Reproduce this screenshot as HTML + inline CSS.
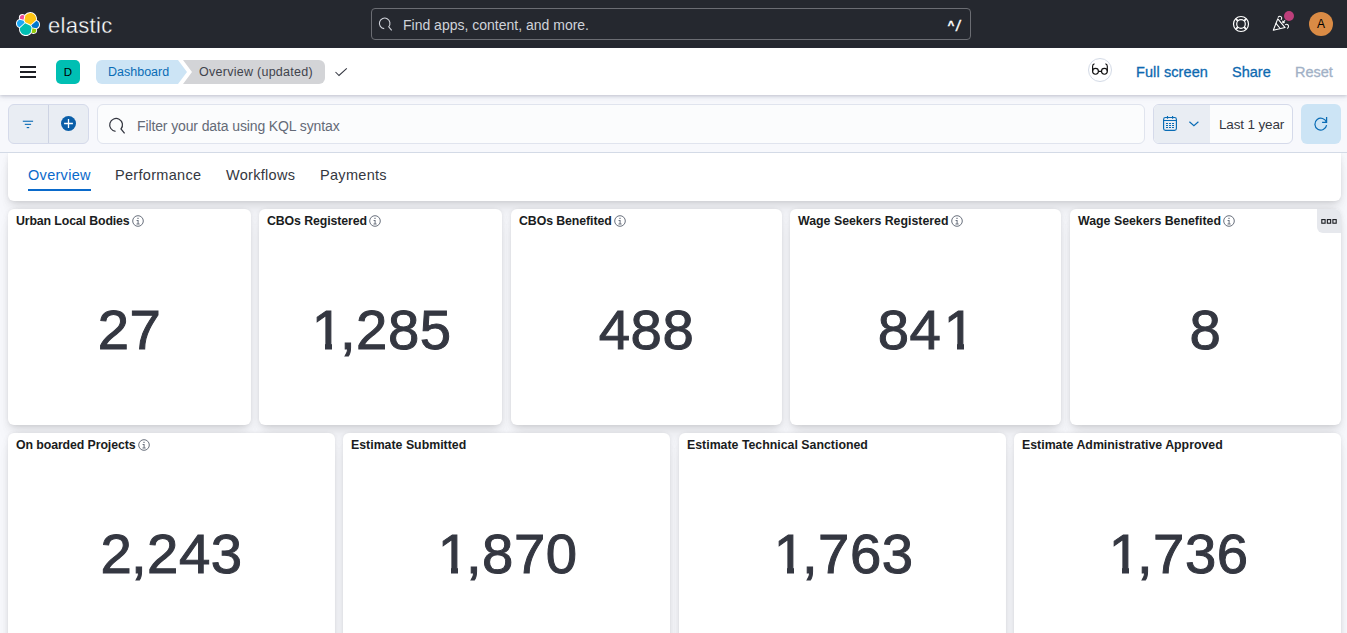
<!DOCTYPE html>
<html lang="en">
<head>
<meta charset="utf-8">
<title>Overview (updated) - Elastic</title>
<style>
*{box-sizing:border-box;margin:0;padding:0}
html,body{width:1347px;height:633px;overflow:hidden}
body{font-family:"Liberation Sans",sans-serif;background:#f7f8fc;color:#1a1c21;position:relative}
.abs{position:absolute}
/* top dark bar */
#top{position:absolute;left:0;top:0;width:1347px;height:48px;background:#25282f}
#brand{position:absolute;left:48px;top:11px;font-size:22px;line-height:30px;color:#fff;letter-spacing:.3px;-webkit-text-stroke:.35px #25282f}
#search{position:absolute;left:371px;top:8px;width:600px;height:32px;border:1px solid #6b6d73;border-radius:4px;background:#25282f}
#search .ph{position:absolute;left:31px;top:0;line-height:32px;font-size:14px;color:#d0d3da}
#search .kbd{position:absolute;left:570px;top:0;width:24px;height:30px;font-weight:bold;color:#fff;font-family:"Liberation Mono",monospace}
#search .kbd span{position:absolute;line-height:20px}
#search .kbd .k1{left:5.700px;top:6.900px;font-size:11px;-webkit-text-stroke:.4px #fff}
#search .kbd .k2{left:12.600px;top:8.300px;font-size:14.500px;transform:scaleX(.76);transform-origin:0 0;-webkit-text-stroke:.5px #fff}
#avatar{position:absolute;left:1309px;top:12px;width:24px;height:24px;border-radius:50%;background:#da8b45;color:#000;font-size:12px;line-height:24px;text-align:center}
#dot{position:absolute;left:1284px;top:11px;width:10px;height:10px;border-radius:50%;background:#bd3f7b}
/* second header */
#hdr{position:absolute;left:0;top:48px;width:1347px;height:47px;background:#fff;box-shadow:0 1px 3px rgba(60,70,100,.22),0 2px 6px rgba(60,70,100,.10);z-index:3}
#space{position:absolute;left:56px;top:12px;width:24px;height:24px;border-radius:5px;background:#00bfb3;color:#000;font-size:11.5px;line-height:24px;text-align:center}
.bc{position:absolute;top:12px;height:24px;line-height:24px;font-size:12.5px}
#bc1{left:96px;width:91px;background:#cce4f5;color:#0a6cb5;padding-left:12px;border-radius:6px 0 0 6px;clip-path:polygon(0 0,82px 0,91px 12px,82px 24px,0 24px)}
#bc2{left:183px;width:142px;letter-spacing:.27px;background:#d3d4d7;color:#3f434c;padding-left:16px;border-radius:0 6px 6px 0;clip-path:polygon(0 0,142px 0,142px 24px,0 24px,9px 12px)}
.lnk{position:absolute;top:13px;font-size:14.5px;line-height:22px;color:#0e69b0;-webkit-text-stroke:.3px currentColor}
/* filter bar */
#fbar{position:absolute;left:0;top:95px;width:1347px;height:58px;background:#f7f8fc;border-bottom:1px solid #d3dae6;z-index:1}
#fgrp{position:absolute;left:8px;top:9px;width:81px;height:40px;border:1px solid #d5daea;border-radius:6px;background:#e9edf3}
#fgrp .sep{position:absolute;left:39px;top:0;width:1px;height:38px;background:#cdd3e3}
#q{position:absolute;left:97px;top:9px;width:1048px;height:40px;border:1px solid #e0e4ee;border-radius:6px;background:#fbfcfd}
#q .ph{position:absolute;left:39px;top:.6px;line-height:40px;font-size:14px;color:#646a77;letter-spacing:-.12px}
#dp{position:absolute;left:1153px;top:9px;width:140px;height:40px;border:1px solid #d5daea;border-radius:6px;background:#fbfcfd;overflow:hidden}
#dp .l{position:absolute;left:0;top:0;width:56px;height:38px;background:#e9edf3}
#dp .t{position:absolute;left:65px;top:1px;line-height:38px;font-size:13.5px;color:#343741;letter-spacing:-.15px}
#rf{position:absolute;left:1301px;top:9px;width:40px;height:40px;border-radius:6px;background:#cce4f5}
/* tabs */
#tabs{position:absolute;left:8px;top:153px;width:1333px;height:48px;background:#fff;border-radius:0 0 6px 6px;box-shadow:0 .9px 4px -1px rgba(0,0,0,.08),0 2.6px 8px -1px rgba(0,0,0,.06),0 5.7px 12px -1px rgba(0,0,0,.05),0 15px 15px -1px rgba(0,0,0,.04)}
.tab{position:absolute;top:11px;font-size:14.5px;line-height:22px;color:#343741;letter-spacing:.3px}
#t1{color:#0a6acb}
#tline{position:absolute;left:20px;top:36px;width:63px;height:2px;background:#0a6acb}
/* panels */
.p{position:absolute;background:#fff;border-radius:6px;box-shadow:0 .9px 4px -1px rgba(0,0,0,.08),0 2.6px 8px -1px rgba(0,0,0,.06),0 5.7px 12px -1px rgba(0,0,0,.05),0 15px 15px -1px rgba(0,0,0,.04)}
.p h3{position:absolute;left:8px;top:5px;font-size:12.35px;line-height:14px;font-weight:bold;color:#1a1c21;white-space:nowrap}
.p .i{display:inline-block;vertical-align:top;margin-left:2.500px;margin-top:1px}
.p .n{position:absolute;left:0;width:100%;text-align:center;top:86.100px;font-size:56.300px;line-height:70px;color:#343741;letter-spacing:.5px;-webkit-text-stroke:1px #343741}
.p .n i{font-style:normal;margin:0 -.2px 0 -1.2px}
.p .n b{font-weight:normal;position:relative;left:2.300px}
.p .n b::before,.p .n b::after{content:"";position:absolute;top:.8em;height:.14em;width:.2em;background:#fff}
.p .n b::before{left:.035em}
.p .n b::after{left:.357em}
.r1{top:209px;height:216px}
.r2{top:433px;height:216px}
#more{position:absolute;right:0;top:0;width:24px;height:24px;background:#e6e8ed;border-radius:0 6px 0 6px}
</style>
</head>
<body>
<div id="top">
  <svg class="abs" style="left:16px;top:12px" width="24" height="24" viewBox="0 0 32 32">
    <g fill="none" fill-rule="evenodd">
      <path fill="#FFF" d="M32 16.77a6.334 6.334 0 0 0-4.194-5.97 8.9 8.9 0 0 0 .166-1.71C27.972 4.077 23.895 0 18.89 0a9.051 9.051 0 0 0-7.36 3.76 4.78 4.78 0 0 0-2.93-1A4.805 4.805 0 0 0 3.8 7.56c0 .585.106 1.152.301 1.675A6.372 6.372 0 0 0 0 15.207a6.345 6.345 0 0 0 4.211 5.986c-.11.542-.166 1.11-.166 1.71C4.045 27.897 8.110 32 13.105 32c2.934 0 5.654-1.409 7.36-3.765a4.745 4.745 0 0 0 2.917 1.004 4.805 4.805 0 0 0 4.8-4.8c0-.585-.106-1.152-.301-1.675A6.385 6.385 0 0 0 32 16.770"/>
      <path fill="#FEC514" d="M12.58 13.787l7.002 3.211 7.066-6.213a7.849 7.849 0 0 0 .152-1.557c0-4.339-3.51-7.848-7.848-7.848a7.867 7.867 0 0 0-6.491 3.415l-1.177 6.115 1.296 2.877z"/>
      <path fill="#00BFB3" d="M5.333 21.215a7.973 7.973 0 0 0-.152 1.58c0 4.353 3.537 7.89 7.901 7.890a7.888 7.888 0 0 0 6.510-3.444l1.164-6.076-1.557-2.971-7.028-3.211-6.838 6.232z"/>
      <path fill="#F04E98" d="M5.290 9.085l4.801 1.136L11.151 4.766a3.793 3.793 0 0 0-6.082 3.020c0 .455.079.894.221 1.299"/>
      <path fill="#1BA9F5" d="M4.872 10.234c-2.138.705-3.642 2.764-3.642 5.052a5.320 5.320 0 0 0 3.417 4.975l6.733-6.087-1.231-2.639-5.277-1.301z"/>
      <path fill="#93C90E" d="M20.873 27.240a3.743 3.743 0 0 0 2.308.797 3.793 3.793 0 0 0 3.793-3.793c0-.456-.079-.895-.221-1.299l-4.788-1.122-1.092 5.417z"/>
      <path fill="#07C" d="M21.847 20.562l5.272 1.233c2.151-.705 3.642-2.764 3.642-5.066a5.313 5.313 0 0 0-3.417-4.962l-6.896 6.043 1.399 2.752z"/>
    </g>
  </svg>
  <div id="brand">elastic</div>
  <div id="search">
    <svg class="abs" style="left:6.200px;top:7.200px" width="16.500" height="16.500" viewBox="0 0 20 20"><path fill="none" stroke="#d0d3da" stroke-width="1.350" d="M16.600 17.400L13 13.010A6.400 6.400 0 1 0 7.540 15.280"/></svg>
    <span class="ph">Find apps, content, and more.</span>
    <span class="kbd"><span class="k1">^</span><span class="k2">/</span></span>
  </div>
  <svg class="abs" style="left:1232px;top:15px" width="18" height="18" viewBox="0 0 18 18"><g fill="none" stroke="#fff"><circle cx="9" cy="9" r="7.500" stroke-width="1.200"/><circle cx="9" cy="9" r="4.300" stroke-width="1.200"/><path stroke-width="1.900" d="M3.900 3.900l1.900 1.900M14.100 3.900l-1.900 1.900M3.900 14.100l1.900-1.900M14.100 14.100l-1.900-1.900"/></g></svg>
  <svg class="abs" style="left:1272px;top:15px" width="20" height="20" viewBox="0 0 20 20"><g fill="none" stroke="#fff" stroke-width="1.050" stroke-linejoin="round" stroke-linecap="round"><path d="M5.800 3.800L1.300 15.300l11.800-2.700z"/><path d="M4 8.300l4.200 5.200"/><path d="M6.200 2.200c.6-1.300 2.700-1.500 3.400.2.300.8.100 1.500-.4 2.100"/><path d="M13.500 9.600c1.200-.7 2.900.1 3 1.500.1.900-.3 1.700-1 2.200"/><path d="M12.800 5.600l-2 2M10.800 6.100v1.500h1.500"/></g></svg>
  <div id="dot"></div>
  <div id="avatar">A</div>
</div>

<div id="hdr">
  <svg class="abs" style="left:20px;top:18px" width="16" height="12" viewBox="0 0 16 12"><path fill="#1d1e24" d="M0 0h16v2H0zM0 5h16v2H0zM0 10h16v2H0z"/></svg>
  <div id="space">D</div>
  <div class="bc" id="bc1">Dashboard</div>
  <div class="bc" id="bc2">Overview (updated)</div>
  <svg class="abs" style="left:334px;top:17px" width="14" height="12" viewBox="0 0 14 12"><path fill="none" stroke="#343741" stroke-width="1.050" d="M1.500 7l3.500 3.500L12.800 3.300"/></svg>
  <div class="abs" style="left:1088px;top:10px;width:24px;height:24px;border-radius:50%;border:1px solid #d3dae6;background:#fff"></div>
  <svg class="abs" style="left:1091px;top:14px" width="18" height="14" viewBox="0 0 18 14"><g fill="none" stroke="#111" stroke-width="1.150"><circle cx="4.500" cy="9.300" r="2.900"/><circle cx="13.400" cy="9.300" r="2.900"/><path d="M7.400 9.300h3.100M1.600 9.300V4.200c0-1.400.8-2.200 1.900-2.500M16.300 9.300V4.200c0-1.400-.8-2.200-1.900-2.500"/></g></svg>
  <div class="lnk" style="left:1136px;letter-spacing:.1px">Full screen</div>
  <div class="lnk" style="left:1232px">Share</div>
  <div class="lnk" style="left:1295px;color:#a2b1c6">Reset</div>
</div>

<div id="fbar">
  <div id="fgrp">
    <svg class="abs" style="left:13px;top:13px" width="12" height="12" viewBox="0 0 12 12"><g fill="#0a6cb5"><rect x=".8" y="2.700" width="10.300" height="1.100"/><rect x="2.800" y="5.800" width="6.300" height="1.100"/><rect x="4.700" y="9" width="2.500" height="1.150"/></g></svg>
    <div class="sep"></div>
    <svg class="abs" style="left:51px;top:10px" width="17" height="17" viewBox="0 0 17 17"><circle cx="8.500" cy="8.500" r="7.500" fill="#0a5ea8"/><path stroke="#fff" stroke-width="1.300" d="M8.500 4.100v8.800M4.100 8.500h8.800"/></svg>
  </div>
  <div id="q">
    <svg class="abs" style="left:10px;top:11px" width="20" height="20" viewBox="0 0 20 20"><path fill="none" stroke="#343741" stroke-width="1.250" d="M16.600 17.400L13 13.010A6.400 6.400 0 1 0 7.540 15.280"/></svg>
    <span class="ph">Filter your data using KQL syntax</span>
  </div>
  <div id="dp">
    <div class="l"></div>
    <svg class="abs" style="left:8px;top:10px" width="16" height="17" viewBox="0 0 16 17"><g fill="none" stroke="#0a6cb5" stroke-width="1.150"><rect x="1.600" y="2.500" width="12.800" height="12.800" rx="1.900"/><path d="M1.600 5.500h12.800M5.500 1v2.700M10.600 1v2.700"/></g><g fill="#0a6cb5"><rect x="4" y="8" width="2" height="1"/><rect x="7" y="8" width="2" height="1"/><rect x="10" y="8" width="2" height="1"/><rect x="4" y="10" width="2" height="1"/><rect x="7" y="10" width="2" height="1"/><rect x="10" y="10" width="2" height="1"/><rect x="4" y="12" width="2" height="1"/><rect x="7" y="12" width="2" height="1"/><rect x="10" y="12" width="2" height="1"/></g></svg>
    <svg class="abs" style="left:34px;top:15px" width="12" height="8" viewBox="0 0 12 8"><path fill="none" stroke="#0a6cb5" stroke-width="1.150" d="M1.400 1.700L5.900 5.800l4.500-4.100"/></svg>
    <span class="t">Last 1 year</span>
  </div>
  <div id="rf">
    <svg class="abs" style="left:11px;top:11px" width="18" height="18" viewBox="0 0 18 18"><g fill="none" stroke="#0a6cb5" stroke-width="1.250"><path d="M14.440 7.380A5.900 5.900 0 1 0 14.610 10.120"/><path d="M14.600 2v5.400h-4.500"/></g></svg>
  </div>
</div>

<div id="tabs">
  <div class="tab" id="t1" style="left:20px">Overview</div>
  <div class="tab" style="left:107px">Performance</div>
  <div class="tab" style="left:218px">Workflows</div>
  <div class="tab" style="left:312px">Payments</div>
  <div id="tline"></div>
</div>

<div class="p r1" style="left:8px;width:243px"><h3 style="letter-spacing:-.13px">Urban Local Bodies<svg class="i" width="12" height="12" viewBox="0 0 12 12"><circle cx="6" cy="6" r="5.300" fill="none" stroke="#69707d" stroke-width="1"/><path fill="#69707d" d="M5.400 2.800h1.200V4H5.400zM4.600 5h2v3.600h1v.9H4.500v-.9h1.100V5.900h-1z"/></svg></h3><div class="n">27</div></div>
<div class="p r1" style="left:259px;width:243px"><h3 style="letter-spacing:-.11px">CBOs Registered<svg class="i" width="12" height="12" viewBox="0 0 12 12"><circle cx="6" cy="6" r="5.300" fill="none" stroke="#69707d" stroke-width="1"/><path fill="#69707d" d="M5.400 2.800h1.200V4H5.400zM4.600 5h2v3.600h1v.9H4.500v-.9h1.100V5.900h-1z"/></svg></h3><div class="n"><b>1</b><i>,</i>285</div></div>
<div class="p r1" style="left:511px;width:271px"><h3 style="letter-spacing:-.09px">CBOs Benefited<svg class="i" width="12" height="12" viewBox="0 0 12 12"><circle cx="6" cy="6" r="5.300" fill="none" stroke="#69707d" stroke-width="1"/><path fill="#69707d" d="M5.400 2.800h1.200V4H5.400zM4.600 5h2v3.600h1v.9H4.500v-.9h1.100V5.900h-1z"/></svg></h3><div class="n">488</div></div>
<div class="p r1" style="left:790px;width:271px"><h3>Wage Seekers Registered<svg class="i" width="12" height="12" viewBox="0 0 12 12"><circle cx="6" cy="6" r="5.300" fill="none" stroke="#69707d" stroke-width="1"/><path fill="#69707d" d="M5.400 2.800h1.200V4H5.400zM4.600 5h2v3.600h1v.9H4.500v-.9h1.100V5.900h-1z"/></svg></h3><div class="n">84<b>1</b></div></div>
<div class="p r1" style="left:1070px;width:271px"><h3>Wage Seekers Benefited<svg class="i" width="12" height="12" viewBox="0 0 12 12"><circle cx="6" cy="6" r="5.300" fill="none" stroke="#69707d" stroke-width="1"/><path fill="#69707d" d="M5.400 2.800h1.200V4H5.400zM4.600 5h2v3.600h1v.9H4.500v-.9h1.100V5.900h-1z"/></svg></h3><div class="n">8</div>
  <div id="more"><svg class="abs" style="left:4px;top:9.600px" width="16" height="6" viewBox="0 0 16 6"><g fill="none" stroke="#1a1c21" stroke-width="1.100"><rect x=".8" y=".6" width="3.300" height="3.600"/><rect x="6.350" y=".6" width="3.300" height="3.600"/><rect x="11.900" y=".6" width="3.300" height="3.600"/></g></svg></div>
</div>

<div class="p r2" style="left:8px;width:327px"><h3 style="letter-spacing:-.1px">On boarded Projects<svg class="i" width="12" height="12" viewBox="0 0 12 12"><circle cx="6" cy="6" r="5.300" fill="none" stroke="#69707d" stroke-width="1"/><path fill="#69707d" d="M5.400 2.800h1.200V4H5.400zM4.600 5h2v3.600h1v.9H4.500v-.9h1.100V5.900h-1z"/></svg></h3><div class="n">2<i>,</i>243</div></div>
<div class="p r2" style="left:343px;width:327px"><h3>Estimate Submitted</h3><div class="n"><b>1</b><i>,</i>870</div></div>
<div class="p r2" style="left:679px;width:327px"><h3>Estimate Technical Sanctioned</h3><div class="n"><b>1</b><i>,</i>763</div></div>
<div class="p r2" style="left:1014px;width:327px"><h3>Estimate Administrative Approved</h3><div class="n"><b>1</b><i>,</i>736</div></div>
</body>
</html>
